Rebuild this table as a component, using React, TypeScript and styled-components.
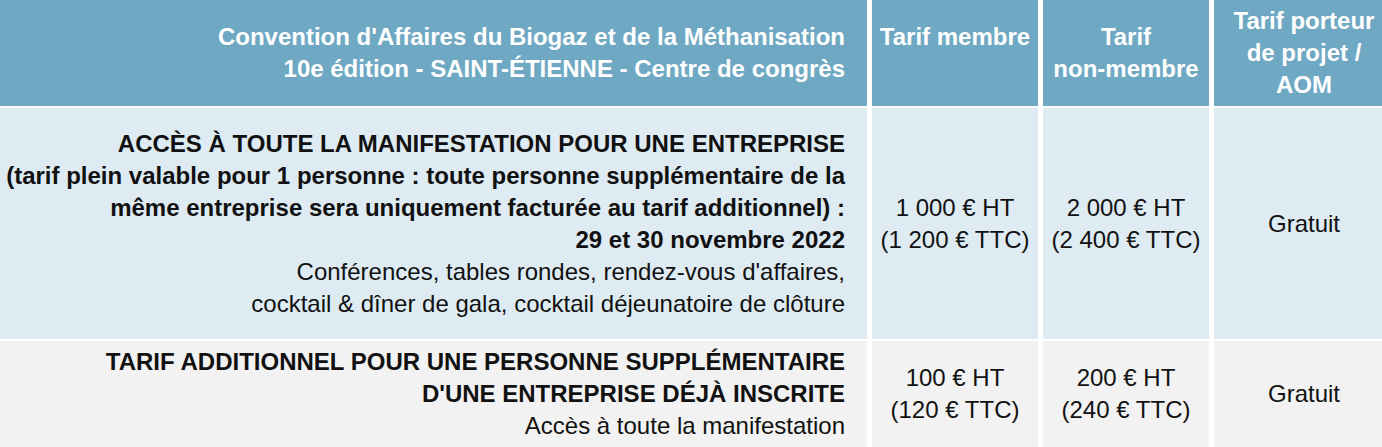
import React from "react";
import styled, { createGlobalStyle } from "styled-components";

const Global = createGlobalStyle`
  html, body { margin: 0; padding: 0; background: #ffffff; overflow: hidden; }
  body { font-family: "Liberation Sans", Arial, Helvetica, sans-serif; }
`;

const Table = styled.div`
  display: grid;
  grid-template-columns: 867px 166px 166px 1fr;
  grid-template-rows: 106px 231px 106px;
  column-gap: 5px;
  row-gap: 2px;
  width: 1394px;
  font-size: 24px;
  line-height: 32px;
  color: #111111;
`;

type Tone = "head" | "blue" | "grey";

const bg: Record<Tone, string> = {
  head: "#6fa8c3",
  blue: "#deebf2",
  grey: "#f2f2f2",
};

const Cell = styled.div<{ $tone: Tone; $right?: boolean; $top?: boolean }>`
  background: ${(p) => bg[p.$tone]};
  color: ${(p) => (p.$tone === "head" ? "#ffffff" : "#111111")};
  font-weight: ${(p) => (p.$tone === "head" ? 700 : 400)};
  display: flex;
  flex-direction: column;
  justify-content: ${(p) => (p.$top ? "flex-start" : "center")};
  align-items: ${(p) => (p.$right ? "flex-end" : "center")};
  text-align: ${(p) => (p.$right ? "right" : "center")};
  padding-top: ${(p) => (p.$top ? "21px" : "0")};
  padding-right: ${(p) => (p.$right ? "22px" : "0")};
  box-sizing: border-box;
  overflow: hidden;
  white-space: nowrap;
`;

const Strong = styled.div`
  font-weight: 700;
`;

const Plain = styled.div`
  font-weight: 400;
`;

export default function App() {
  return (
    <>
      <Global />
      <Table>
        <Cell $tone="head" $right>
          Convention d'Affaires du Biogaz et de la Méthanisation
          <br />
          10e édition - SAINT-ÉTIENNE - Centre de congrès
        </Cell>
        <Cell $tone="head" $top>
          Tarif membre
        </Cell>
        <Cell $tone="head">
          Tarif
          <br />
          non-membre
        </Cell>
        <Cell $tone="head">
          Tarif porteur
          <br />
          de projet /
          <br />
          AOM
        </Cell>

        <Cell $tone="blue" $right>
          <Strong>
            ACCÈS À TOUTE LA MANIFESTATION POUR UNE ENTREPRISE
            <br />
            (tarif plein valable pour 1 personne : toute personne supplémentaire de la
            <br />
            même entreprise sera uniquement facturée au tarif additionnel) :
            <br />
            29 et 30 novembre 2022
          </Strong>
          <Plain>
            Conférences, tables rondes, rendez-vous d'affaires,
            <br />
            cocktail &amp; dîner de gala, cocktail déjeunatoire de clôture
          </Plain>
        </Cell>
        <Cell $tone="blue">
          1 000 € HT
          <br />
          (1 200 € TTC)
        </Cell>
        <Cell $tone="blue">
          2 000 € HT
          <br />
          (2 400 € TTC)
        </Cell>
        <Cell $tone="blue">Gratuit</Cell>

        <Cell $tone="grey" $right>
          <Strong>
            TARIF ADDITIONNEL POUR UNE PERSONNE SUPPLÉMENTAIRE
            <br />
            D'UNE ENTREPRISE DÉJÀ INSCRITE
          </Strong>
          <Plain>Accès à toute la manifestation</Plain>
        </Cell>
        <Cell $tone="grey">
          100 € HT
          <br />
          (120 € TTC)
        </Cell>
        <Cell $tone="grey">
          200 € HT
          <br />
          (240 € TTC)
        </Cell>
        <Cell $tone="grey">Gratuit</Cell>
      </Table>
    </>
  );
}
